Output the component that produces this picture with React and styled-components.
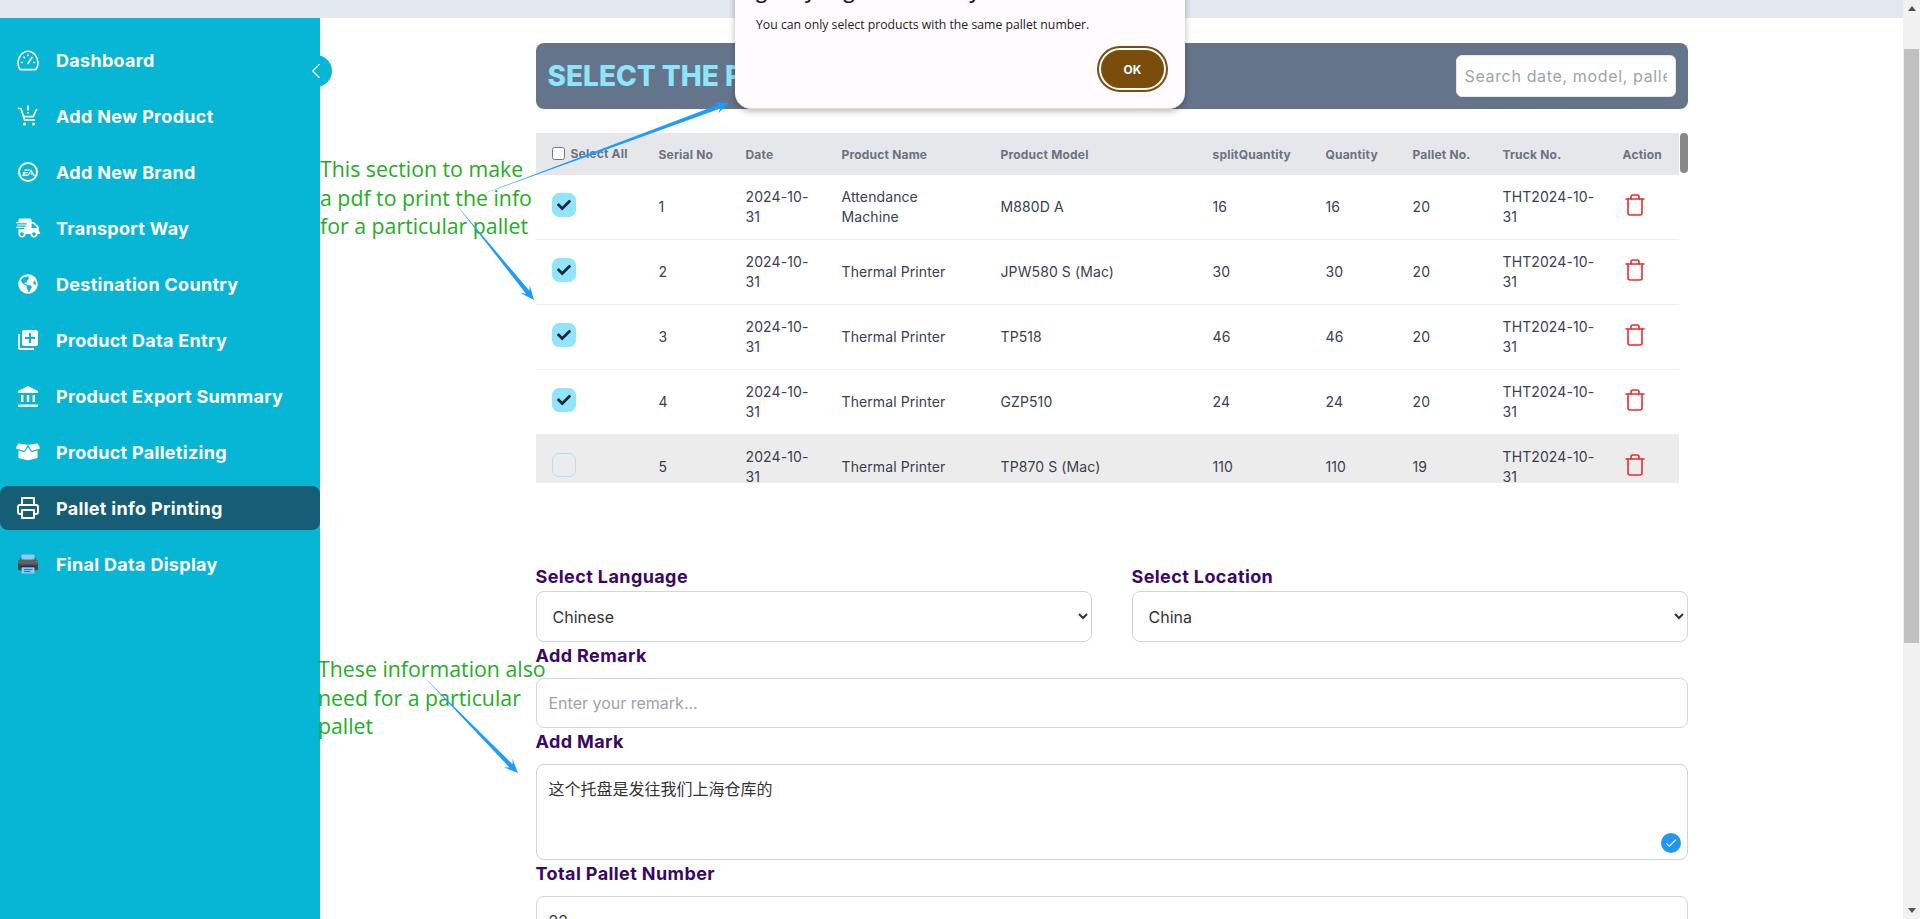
import React from "react";
import styled, { createGlobalStyle } from "styled-components";
import { SiEa } from "react-icons/si";
import { FaShippingFast, FaGlobeAmericas, FaBoxOpen, FaCheck } from "react-icons/fa";
import { MdLibraryAdd, MdCheck } from "react-icons/md";
import { FiPrinter } from "react-icons/fi";
import { FcPrint } from "react-icons/fc";
import { Trash, ChevronLeft } from "lucide-react";

const GlobalStyle = createGlobalStyle`
  html, body {
    margin: 0;
    height: 100%;
    overflow: hidden;
    background: #fff;
  }
  * {
    box-sizing: border-box;
  }
  body {
    font-family: Inter, "Noto Sans CJK SC", sans-serif;
    color: #374151;
  }
`;

const Page = styled.div`
  position: relative;
  display: flex;
  width: 100vw;
  height: 100vh;
  overflow: hidden;
`;

const Window = styled.div`
  flex: 1;
  min-width: 0;
  display: flex;
  flex-direction: column;
`;

const TopBar = styled.div`
  height: 18px;
  flex-shrink: 0;
  background: #e2e8f0;
`;

const Body = styled.div`
  flex: 1;
  min-height: 0;
  display: flex;
`;

const PageScrollbar = styled.div`
  width: 17px;
  flex-shrink: 0;
  display: flex;
  flex-direction: column;
  align-items: center;
  background: #f1f1f1;
`;

const ScrollArrow = styled.div`
  width: 0;
  height: 0;
  border-left: 4px solid transparent;
  border-right: 4px solid transparent;
  ${(p) => (p.$down ? "border-top: 5px solid #505050;" : "border-bottom: 5px solid #505050;")}
  margin: ${(p) => (p.$down ? "auto 0 6px" : "6px 0 0")};
`;

const PageThumb = styled.div`
  width: 15px;
  height: 594px;
  margin-top: 38px;
  background: #c1c1c1;
`;

const Sidebar = styled.aside`
  position: relative;
  width: 320px;
  flex-shrink: 0;
  padding-top: 20px;
  display: flex;
  flex-direction: column;
  gap: 12px;
  background: #07b6d5;
`;

const NavItem = styled.div`
  height: 44px;
  display: flex;
  align-items: center;
  gap: 16px;
  padding-left: 16px;
  border-radius: 8px;
  color: #fff;
  font-size: 18px;
  font-weight: 700;
  letter-spacing: 0.3px;
  background: ${(p) => (p.$active ? "#155e75" : "transparent")};
`;

const NavIcon = styled.span`
  width: 24px;
  height: 24px;
  flex-shrink: 0;
  display: flex;
  align-items: center;
  justify-content: center;
  font-size: ${(p) => p.$size || 22}px;
`;

const BrandRing = styled.span`
  width: 20px;
  height: 20px;
  display: flex;
  align-items: center;
  justify-content: center;
  border: 2px solid #fff;
  border-radius: 50%;
  font-size: 13px;
`;

const Collapse = styled.div`
  position: absolute;
  top: 37px;
  right: -12px;
  width: 32px;
  height: 32px;
  display: flex;
  align-items: center;
  justify-content: center;
  border-radius: 50%;
  background: #07b6d5;
  color: #fff;
`;

const Main = styled.main`
  flex: 1;
  min-width: 0;
  padding-top: 25px;
  overflow: hidden;
  background: #fff;
`;

const Content = styled.div`
  width: 1152px;
  margin: 0 auto;
`;

const Banner = styled.div`
  height: 66px;
  display: flex;
  align-items: center;
  justify-content: space-between;
  padding: 0 12px;
  border-radius: 8px;
  background: #64748b;
`;

const BannerTitle = styled.h1`
  margin: 0;
  font-size: 28px;
  font-weight: 800;
  color: #8ee4fb;
`;

const SearchInput = styled.input`
  width: 220px;
  height: 42px;
  padding: 0 8px;
  border: 1px solid #e5e7eb;
  border-radius: 6px;
  font: inherit;
  font-size: 16px;
  letter-spacing: 0.65px;
  background: #fff;
  &::placeholder {
    color: #9ca3af;
  }
`;

const TableWrap = styled.div`
  height: 350px;
  margin-top: 24px;
  display: flex;
  justify-content: space-between;
`;

const TableClip = styled.div`
  width: 1143px;
  height: 100%;
  overflow: hidden;
`;

const TableThumb = styled.div`
  width: 8px;
  height: 40px;
  border-radius: 4px;
  background: #888;
`;

const Table = styled.table`
  width: 100%;
  table-layout: fixed;
  border-collapse: collapse;
`;

const Th = styled.th`
  height: 42px;
  padding: 0 16px;
  text-align: left;
  white-space: nowrap;
  font-size: 12px;
  font-weight: 700;
  letter-spacing: 0.2px;
  color: #6b7280;
  background: #e5e7eb;
`;

const HeadCheck = styled.input`
  width: 13px;
  height: 13px;
  margin: 0 6px 0 0;
  position: relative;
  top: -2px;
  vertical-align: middle;
`;

const Tr = styled.tr`
  border-bottom: 1px solid #edeef0;
  background: ${(p) => (p.$hover ? "#ececec" : "#fff")};
`;

const Td = styled.td`
  padding: 12px ${(p) => (p.$tight ? "8px" : "16px")} 12px 16px;
  font-size: 14px;
  line-height: 20px;
  letter-spacing: 0.1px;
  color: #374151;
  vertical-align: middle;
`;

const RowCheck = styled.span`
  width: 24px;
  height: 24px;
  margin-top: -4px;
  display: flex;
  align-items: center;
  justify-content: center;
  border-radius: 7px;
  font-size: 14px;
  color: #1f2937;
  background: ${(p) => (p.$on ? "#90e5fd" : "transparent")};
  border: 1px solid ${(p) => (p.$on ? "#90e5fd" : "#9fe6fb")};
`;

const DeleteIcon = styled(Trash)`
  display: block;
  margin-top: -4px;
  color: #ef2b2b;
  stroke-width: 1.6;
`;

const Form = styled.form`
  margin-top: 80px;
`;

const TwoCols = styled.div`
  display: grid;
  grid-template-columns: 1fr 1fr;
  gap: 40px;
`;

const Label = styled.label`
  display: block;
  height: 28px;
  margin-bottom: ${(p) => (p.$tight ? "0" : "8px")};
  font-size: 18px;
  line-height: 28px;
  font-weight: 700;
  letter-spacing: 0.4px;
  color: #3b0764;
`;

const Select = styled.select`
  display: block;
  width: 100%;
  height: 51px;
  padding: 0 12px;
  border: 1.5px solid #d1d5db;
  border-radius: 8px;
  font: inherit;
  font-size: 16px;
  color: #333;
  background: #fff;
`;

const Input = styled.input`
  display: block;
  width: 100%;
  height: 50px;
  padding: 0 12px;
  border: 1.5px solid #d1d5db;
  border-radius: 8px;
  font: inherit;
  font-size: 16px;
  color: #333;
  background: #fff;
  &::placeholder {
    color: #9ca3af;
  }
`;

const AreaWrap = styled.div`
  position: relative;
`;

const TextArea = styled.textarea`
  display: block;
  width: 100%;
  height: 96px;
  padding: 12px;
  border: 1.5px solid #d1d5db;
  border-radius: 8px;
  resize: none;
  font: inherit;
  font-size: 16px;
  line-height: 24px;
  color: #333;
  background: #fff;
`;

const AreaBadge = styled.span`
  position: absolute;
  right: 7px;
  bottom: 7px;
  width: 20px;
  height: 20px;
  display: flex;
  align-items: center;
  justify-content: center;
  border-radius: 50%;
  font-size: 14px;
  color: #fff;
  background: #2196f3;
`;

const Dialog = styled.div`
  position: absolute;
  top: -31px;
  left: 735px;
  width: 450px;
  height: 140px;
  padding: 8px 19px 0 21px;
  display: flex;
  flex-direction: column;
  border-radius: 16px;
  border-bottom: 1px solid #ecd9cc;
  background: #fffbff;
  box-shadow: 0 2px 6px rgba(0, 0, 0, 0.3);
  font-family: "Open Sans", sans-serif;
  z-index: 3;
`;

const DialogTitle = styled.div`
  font-size: 20px;
  line-height: 28px;
  font-weight: 600;
  color: #1d1b20;
  white-space: nowrap;
`;

const DialogText = styled.div`
  margin-top: 10px;
  font-size: 12.25px;
  line-height: 20px;
  color: #1d1b20;
`;

const OkButton = styled.button`
  align-self: flex-end;
  width: 67px;
  height: 42px;
  margin-top: 13px;
  border: 2px solid #fff;
  outline: 2px solid #7a4d0b;
  border-radius: 21px;
  font-family: Inter, sans-serif;
  font-size: 12px;
  font-weight: 700;
  color: #fff;
  background: #7a4d0b;
`;

const Note = styled.div`
  position: absolute;
  top: ${(p) => p.$top}px;
  left: ${(p) => p.$left}px;
  font-family: "Open Sans", sans-serif;
  font-size: 21.3px;
  line-height: 28.5px;
  color: #1fae1f;
  white-space: pre;
  z-index: 1;
`;

const ArrowLayer = styled.svg`
  position: absolute;
  top: 0;
  left: 0;
  width: 1920px;
  height: 919px;
  pointer-events: none;
  z-index: 2;
`;

// tapered callout arrow, thin at the tail and wide at the neck
const arrowPoints = ([x1, y1], [x2, y2]) => {
  const len = Math.hypot(x2 - x1, y2 - y1);
  const ux = (x2 - x1) / len;
  const uy = (y2 - y1) / len;
  const nx = -uy;
  const ny = ux;
  const at = (back, side) => `${x2 - ux * back + nx * side},${y2 - uy * back + ny * side}`;
  return [
    `${x1},${y1}`,
    at(10, 2.2),
    at(14, 6),
    at(0, 0),
    at(14, -6),
    at(10, -2.2),
  ].join(" ");
};

const GaugeIcon = () => (
  <svg width="22" height="21" viewBox="0 0 22 21" fill="none" stroke="currentColor" strokeWidth="1.6" strokeLinecap="round">
    <path d="M3.2 19.6C1.8 17.8 1 15.7 1 13.2 1 6.9 5.5 1.2 11 1.2s10 5.7 10 12c0 2.5-.8 4.6-2.2 6.4z" />
    <path d="M11 13.5l4-6" />
    <path d="M4.6 12.5h.6M7 7.2l.4.4M11 5v.6M17 12.5h.6" />
  </svg>
);

const CartIcon = () => (
  <svg width="22" height="22" viewBox="0 0 22 22" fill="none" stroke="currentColor" strokeWidth="1.7">
    <path d="M1 3.5h3l3.6 11.5h10.4" />
    <path d="M5.2 8l1.6 3.6h9.4L19.8 4" />
    <path d="M11 0.5v5M11 7v1.6" />
    <circle cx="7.5" cy="19" r="1.6" fill="currentColor" stroke="none" />
    <circle cx="16.5" cy="19" r="1.6" fill="currentColor" stroke="none" />
  </svg>
);

const BankIcon = () => (
  <svg width="20" height="21" viewBox="0 0 20 21" fill="currentColor">
    <path d="M10 0l10 5v2H0V5z" />
    <rect x="3" y="9" width="2.4" height="7" />
    <rect x="8.8" y="9" width="2.4" height="7" />
    <rect x="14.6" y="9" width="2.4" height="7" />
    <rect x="0" y="18.5" width="20" height="2.5" />
  </svg>
);

const navItems = [
  { label: "Dashboard", icon: <GaugeIcon /> },
  { label: "Add New Product", icon: <CartIcon /> },
  { label: "Add New Brand", icon: <BrandRing><SiEa /></BrandRing> },
  { label: "Transport Way", icon: <FaShippingFast />, size: 24 },
  { label: "Destination Country", icon: <FaGlobeAmericas />, size: 20 },
  { label: "Product Data Entry", icon: <MdLibraryAdd />, size: 24 },
  { label: "Product Export Summary", icon: <BankIcon /> },
  { label: "Product Palletizing", icon: <FaBoxOpen />, size: 24 },
  { label: "Pallet info Printing", icon: <FiPrinter />, size: 24, active: true },
  { label: "Final Data Display", icon: <FcPrint />, size: 25 },
];

const columns = [
  ["Select All", 107],
  ["Serial No", 87],
  ["Date", 96],
  ["Product Name", 159],
  ["Product Model", 212],
  ["splitQuantity", 113],
  ["Quantity", 87],
  ["Pallet No.", 90],
  ["Truck No.", 120],
  ["Action", 72],
];

const rows = [
  { id: 1, name: "Attendance Machine", model: "M880D A", split: 16, qty: 16, pallet: 20, on: true },
  { id: 2, name: "Thermal Printer", model: "JPW580 S (Mac)", split: 30, qty: 30, pallet: 20, on: true },
  { id: 3, name: "Thermal Printer", model: "TP518", split: 46, qty: 46, pallet: 20, on: true },
  { id: 4, name: "Thermal Printer", model: "GZP510", split: 24, qty: 24, pallet: 20, on: true },
  { id: 5, name: "Thermal Printer", model: "TP870 S (Mac)", split: 110, qty: 110, pallet: 19, on: false },
];

export default function App() {
  return (
    <Page>
      <GlobalStyle />
      <Window>
        <TopBar />
        <Body>
          <Sidebar>
            {navItems.map((item) => (
              <NavItem key={item.label} $active={item.active}>
                <NavIcon $size={item.size}>{item.icon}</NavIcon>
                {item.label}
              </NavItem>
            ))}
            <Collapse>
              <ChevronLeft size={26} strokeWidth={1} />
            </Collapse>
          </Sidebar>
          <Main>
            <Content>
              <Banner>
                <BannerTitle>SELECT THE PRODUCTS</BannerTitle>
                <SearchInput placeholder="Search date, model, pallet..." />
              </Banner>
              <TableWrap>
                <TableClip>
                  <Table>
                    <colgroup>
                      {columns.map(([name, width]) => (
                        <col key={name} width={width} />
                      ))}
                    </colgroup>
                    <thead>
                      <tr>
                        {columns.map(([name], i) => (
                          <Th key={name}>
                            {i === 0 && <HeadCheck type="checkbox" />}
                            {name}
                          </Th>
                        ))}
                      </tr>
                    </thead>
                    <tbody>
                      {rows.map((row) => (
                        <Tr key={row.id} $hover={!row.on}>
                          <Td>
                            <RowCheck $on={row.on}>{row.on && <FaCheck />}</RowCheck>
                          </Td>
                          <Td>{row.id}</Td>
                          <Td>2024-10-31</Td>
                          <Td>{row.name}</Td>
                          <Td>{row.model}</Td>
                          <Td>{row.split}</Td>
                          <Td>{row.qty}</Td>
                          <Td>{row.pallet}</Td>
                          <Td $tight>THT2024-10-31</Td>
                          <Td>
                            <DeleteIcon size={24} />
                          </Td>
                        </Tr>
                      ))}
                    </tbody>
                  </Table>
                </TableClip>
                <TableThumb />
              </TableWrap>
              <Form>
                <TwoCols>
                  <div>
                    <Label $tight>Select Language</Label>
                    <Select defaultValue="Chinese">
                      <option>Chinese</option>
                      <option>English</option>
                    </Select>
                  </div>
                  <div>
                    <Label $tight>Select Location</Label>
                    <Select defaultValue="China">
                      <option>China</option>
                    </Select>
                  </div>
                </TwoCols>
                <Label>Add Remark</Label>
                <Input placeholder="Enter your remark..." />
                <Label>Add Mark</Label>
                <AreaWrap>
                  <TextArea defaultValue="这个托盘是发往我们上海仓库的" />
                  <AreaBadge>
                    <MdCheck />
                  </AreaBadge>
                </AreaWrap>
                <Label>Total Pallet Number</Label>
                <Input defaultValue="22" />
              </Form>
            </Content>
          </Main>
        </Body>
      </Window>
      <PageScrollbar>
        <ScrollArrow />
        <PageThumb />
        <ScrollArrow $down />
      </PageScrollbar>

      <Dialog>
        {/* only the descenders of this line show, the rest is above the window */}
        <DialogTitle>gently aligned carefully</DialogTitle>
        <DialogText>You can only select products with the same pallet number.</DialogText>
        <OkButton type="button">OK</OkButton>
      </Dialog>

      <Note $top={155} $left={320}>{"This section to make\na pdf to print the info\nfor a particular pallet"}</Note>
      <Note $top={655} $left={318}>{"These information also\nneed for a particular\npallet"}</Note>
      <ArrowLayer viewBox="0 0 1920 919">
        <polygon fill="#1e9bff" points={arrowPoints([480, 195], [729, 103])} />
        <polygon fill="#1e9bff" points={arrowPoints([455, 203], [534, 300])} />
        <polygon fill="#1e9bff" points={arrowPoints([424, 677], [518, 773])} />
      </ArrowLayer>
    </Page>
  );
}
